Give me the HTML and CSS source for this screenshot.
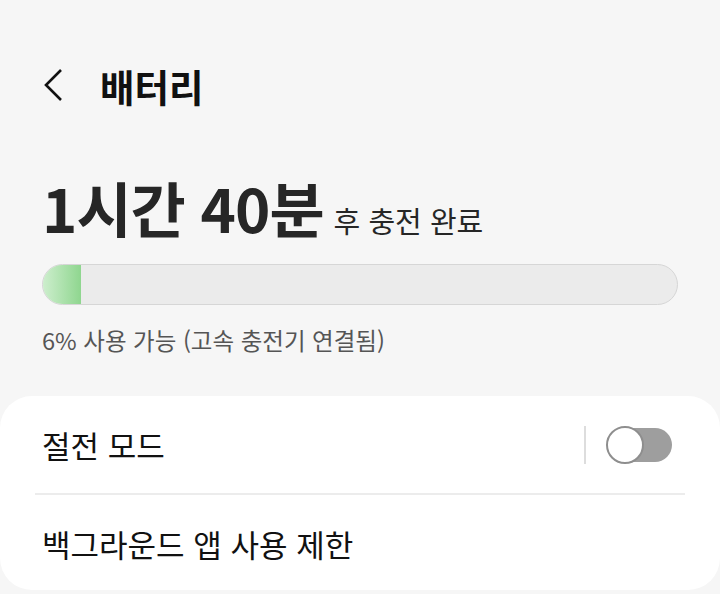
FILE: index.html
```html
<!DOCTYPE html>
<html lang="ko">

<head>
    <meta charset="UTF-8">
    <meta name="viewport" content="width=device-width, initial-scale=1.0">
    <title>배터리</title>
    <link rel="stylesheet" href="styles.css">
</head>

<body>
    <div class="header">
        <svg class="back" width="24" height="36" viewBox="0 0 24 36">
            <path d="M19 3 L4 18 L19 33" fill="none" stroke="#111" stroke-width="2.6" />
        </svg>
        <h1 class="title">배터리</h1>
    </div>

    <div class="summary">
        <div class="time">
            <span class="big">1시간 40분</span>
            <span class="small">후 충전 완료</span>
        </div>
        <div class="bar">
            <div class="fill" style="width: 6%"></div>
        </div>
        <div class="status">6% 사용 가능 (고속 충전기 연결됨)</div>
    </div>

    <div class="card">
        <div class="row">
            <span class="label">절전 모드</span>
            <div class="switch_wrap">
                <span class="vline"></span>
                <span class="switch"><span class="knob"></span></span>
            </div>
        </div>
        <div class="divider"></div>
        <div class="row">
            <span class="label">백그라운드 앱 사용 제한</span>
        </div>
    </div>
</body>

</html>
```

FILE: styles.css
```css
* {
    margin: 0px;
    padding: 0px;
    box-sizing: border-box;
}

body {
    background-color: #f6f6f6;
    font-family: "Noto Sans CJK KR", "Noto Sans", sans-serif;
    width: 720px;
    height: 594px;
    overflow: hidden;
}

.header {
    display: flex;
    align-items: center;
    height: 60px;
    margin-top: 55px;
    padding-left: 42px;
}

.back {
    display: block;
}

.title {
    font-size: 37.5px;
    font-weight: bold;
    color: #111;
    margin-left: 34px;
}

.summary {
    padding: 57px 42px 0 42px;
}

.time {
    display: flex;
    align-items: baseline;
    color: #262626;
}

.big {
    font-size: 60px;
    font-weight: bold;
    letter-spacing: -1px;
    line-height: 70px;
}

.small {
    font-size: 29px;
    margin-left: 10px;
}

.bar {
    margin-top: 22px;
    height: 41px;
    border-radius: 21px;
    background-color: #ebebeb;
    border: 1px solid #d6d6d6;
    overflow: hidden;
    width: 636px;
}

.fill {
    height: 100%;
    background: linear-gradient(to right, #cdeecd, #8fd68f);
}

.status {
    margin-top: 18px;
    font-size: 23.5px;
    color: #555;
}

.card {
    margin-top: 39px;
    background-color: #fff;
    border-radius: 32px;
    padding: 0 35px;
    height: 194px;
}

.row {
    display: flex;
    align-items: center;
    justify-content: space-between;
    height: 97px;
    padding: 0 13px 0 7px;
}

.label {
    font-size: 31px;
    color: #111;
}

.switch_wrap {
    display: flex;
    align-items: center;
}

.vline {
    width: 2px;
    height: 38px;
    background-color: #ddd;
    margin-right: 21px;
}

.switch {
    position: relative;
    width: 65px;
    height: 34px;
    border-radius: 17px;
    background-color: #9e9e9e;
}

.knob {
    position: absolute;
    left: -1px;
    top: -2px;
    width: 38px;
    height: 38px;
    border-radius: 50%;
    background-color: #fff;
    border: 2px solid #8e8e8e;
}

.divider {
    height: 2px;
    background-color: #ececec;
}
```
